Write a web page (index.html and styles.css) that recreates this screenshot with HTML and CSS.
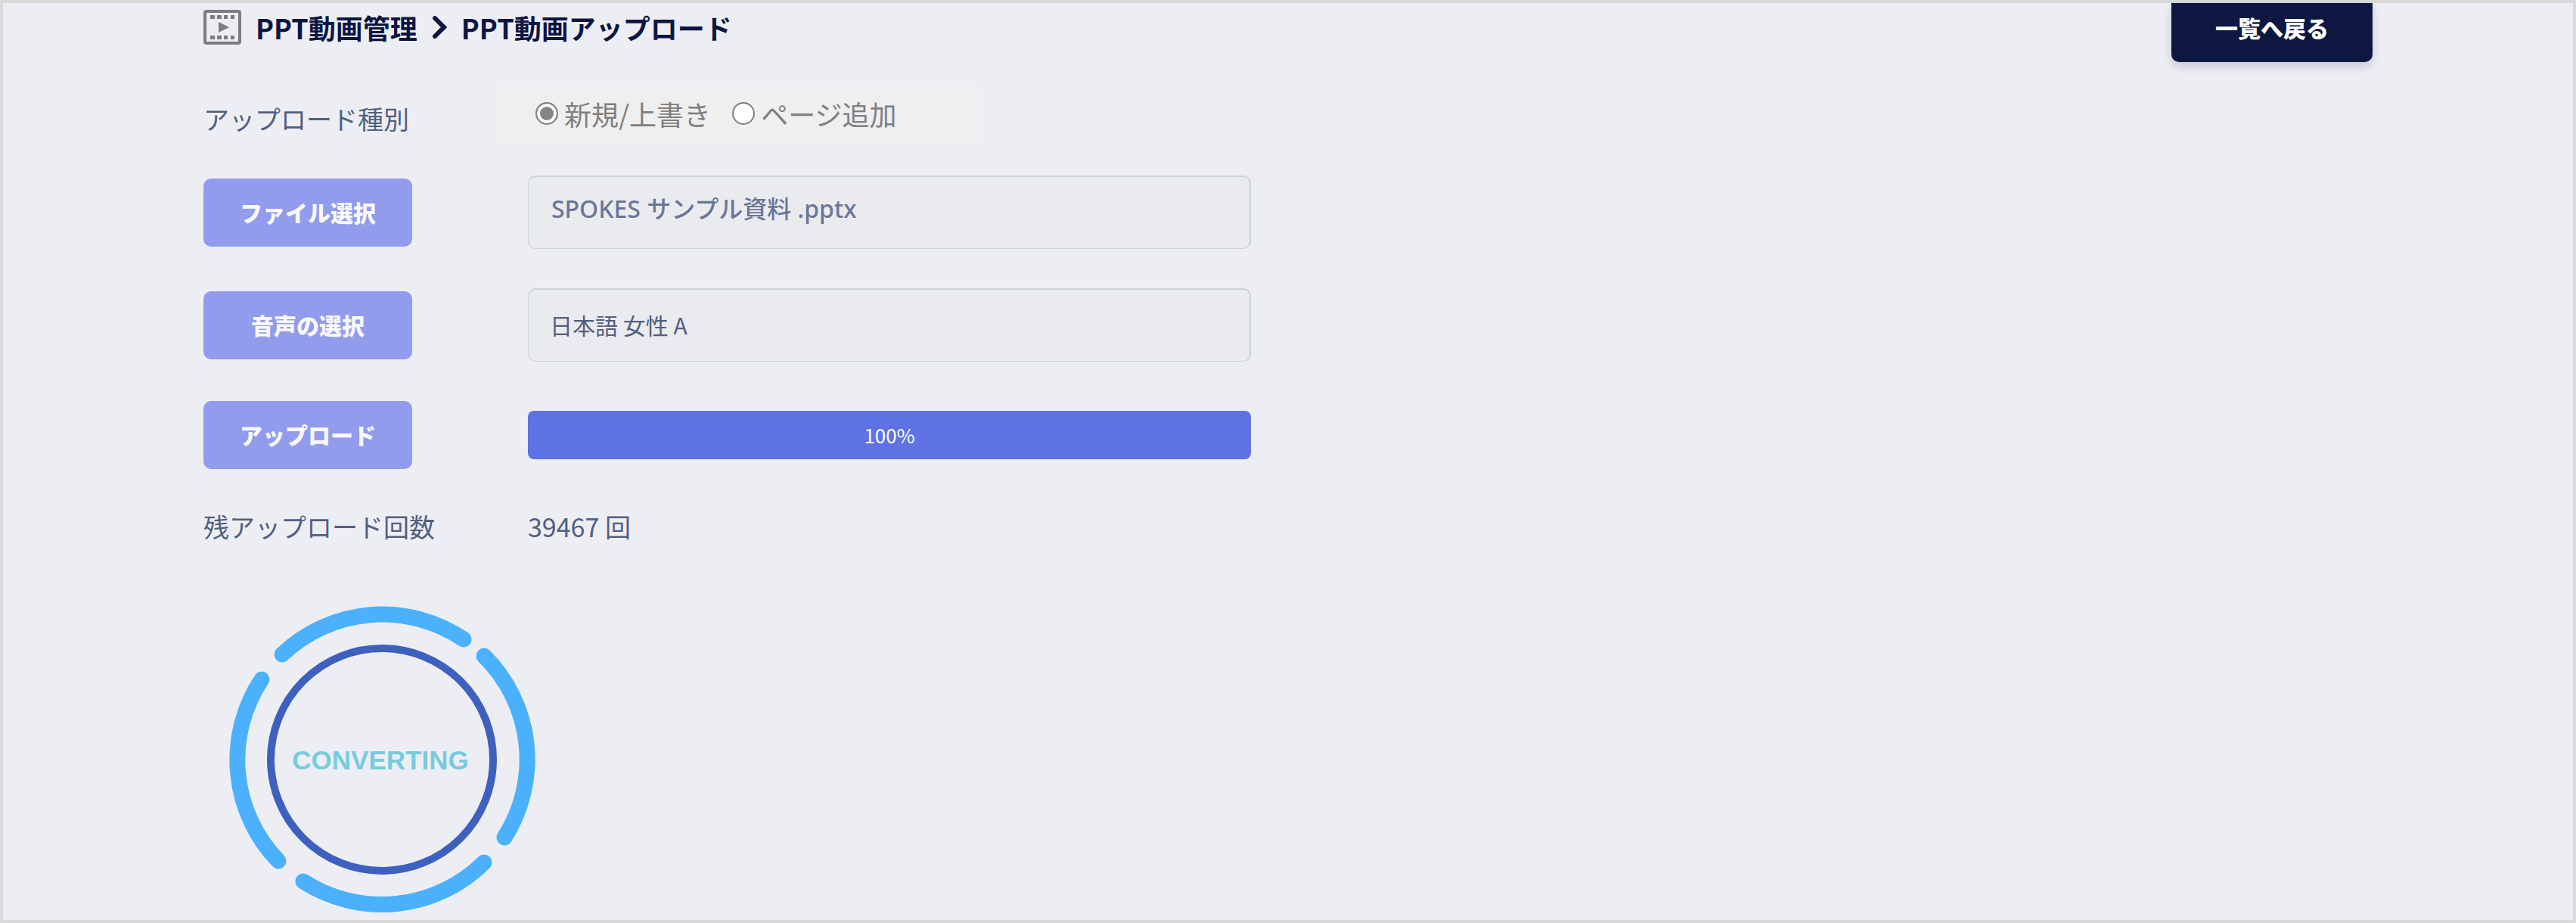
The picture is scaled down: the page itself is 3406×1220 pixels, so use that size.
FILE: index.html
```html
<!DOCTYPE html>
<html lang="ja">
<head>
  <meta charset="utf-8">
  <title>PPT動画アップロード</title>
  <link rel="stylesheet" href="styles.css">
</head>
<body>
  <main class="page">
    <header class="page-header">
      <h1 class="breadcrumb">
        <svg class="film-icon" viewBox="0 0 50 46" aria-hidden="true">
          <rect x="2" y="2" width="46" height="42" rx="2" fill="none" stroke="#7d7d7d" stroke-width="4"/>
          <g fill="#7d7d7d">
            <path d="M9 7h6v5H9zM18 7h6v5h-6zM27 7h5v5h-5zM36 7h5v5h-5z"/>
            <path d="M9 34h6v5H9zM18 34h6v5h-6zM27 34h5v5h-5zM36 34h5v5h-5z"/>
            <path d="M20 16l14 7-14 7z"/>
          </g>
        </svg>
        <span>PPT動画管理</span>
        <svg class="chevron" viewBox="0 0 20 30" aria-hidden="true">
          <path d="M4 3l12 12L4 27" fill="none" stroke="#0d1640" stroke-width="6" stroke-linecap="round"/>
        </svg>
        <span>PPT動画アップロード</span>
      </h1>
      <a class="back-button" href="#">一覧へ戻る</a>
    </header>

    <form>
      <div class="row type-row">
        <span class="label" id="type-label">アップロード種別</span>
        <div class="radio-group" role="radiogroup" aria-labelledby="type-label">
          <input type="radio" name="type" id="type-new" checked>
          <label for="type-new">新規/上書き</label>
          <input type="radio" name="type" id="type-add">
          <label for="type-add">ページ追加</label>
        </div>
      </div>

      <div class="rows">
        <div class="row">
          <button class="button" type="button">ファイル選択</button>
          <input class="text-box file-name" type="text" aria-label="ファイル選択" value="SPOKES サンプル資料 .pptx" readonly>
        </div>
        <div class="row">
          <button class="button" type="button">音声の選択</button>
          <input class="text-box" type="text" aria-label="音声の選択" value="日本語 女性 A" readonly>
        </div>
        <div class="row">
          <button class="button" type="button">アップロード</button>
          <div class="progress">
            <div class="progress-bar" role="progressbar" aria-valuenow="100" style="width: 100%">100%</div>
          </div>
        </div>
        <div class="row">
          <span class="label">残アップロード回数</span>
          <span class="label">39467 回</span>
        </div>
      </div>
    </form>

    <!-- 変換中 -->
    <svg class="converting" viewBox="-203 -203 406 406">
      <g class="arcs">
        <path d="M-132-139A192 192 0 0 1 108-159"/>
        <path d="M135-137A192 192 0 0 1 162 103"/>
        <path d="M135 136A192 192 0 0 1-104 161"/>
        <path d="M-137 134A192 192 0 0 1-159-106"/>
      </g>
      <circle class="inner" r="147"/>
      <text class="converting-text" x="-2" y="13">CONVERTING</text>
    </svg>
  </main>
</body>
</html>
```
FILE: styles.css
```css
* {
  box-sizing: border-box;
}

body {
  margin: 0;
  background-color: #edeef3;
  color: #525f7f;
  font-family: "Noto Sans CJK JP", sans-serif;
  font-size: 34px;
  line-height: 48px;
}

.page {
  min-height: 100vh;
  padding: 0 265px;
  border: 4px solid #d9d9d9;
}

.page-header {
  display: flex;
  justify-content: space-between;
  align-items: flex-start;
  height: 109px;
}

.breadcrumb {
  display: flex;
  align-items: center;
  gap: 19px;
  margin: 8px 0 0;
  color: #0d1640;
  font-size: 36px;
  font-weight: bold;
}

.film-icon {
  width: 50px;
  height: 46px;
}

.chevron {
  width: 20px;
  height: 30px;
}

.back-button {
  padding: 8px 58px 22px;
  border-radius: 0 0 10px 10px;
  background-color: #0e1741;
  box-shadow: 0 6px 12px rgba(50, 50, 93, 0.2);
  color: #fff;
  font-size: 30px;
  font-weight: 900;
  text-decoration: none;
}

.row {
  display: grid;
  grid-template-columns: 429px minmax(0, 956px);
  align-items: center;
}

.type-row {
  height: 88px;
  margin-bottom: 31px;
}

.radio-group {
  display: flex;
  align-items: center;
  align-self: start;
  width: 639px;
  height: 74px;
  margin-left: -42px;
  padding-left: 52px;
  background-color: #efefef;
  color: #7f7f7f;
  font-size: 36px;
}

.radio-group label {
  margin: 0 28px 0 8px;
}

.radio-group input {
  appearance: none;
  width: 30px;
  height: 30px;
  margin: 0;
  border: 2px solid #7f7f7f;
  border-radius: 50%;
  background-color: #fff;
}

.radio-group input:checked {
  border-color: #808080;
  background-color: #858585;
  box-shadow: inset 0 0 0 4px #fff;
}

.rows {
  display: flex;
  flex-direction: column;
  gap: 52px;
}

.button {
  width: 276px;
  height: 90px;
  padding: 0 0 2px;
  border: none;
  border-radius: 10px;
  background-color: #929cec;
  color: #f9f9fd;
  font-family: inherit;
  font-size: 30px;
  font-weight: 900;
}

.text-box {
  width: 100%;
  height: 97px;
  padding: 0 28px 2px;
  border: 1px solid #cad1d8;
  border-width: 2px 2px 1px 1px;
  border-radius: 10px;
  background-color: #eaebef;
  color: #525f7f;
  font-family: inherit;
  font-size: 30px;
}

.file-name {
  padding: 0 30px 14px;
  color: #6a7696;
  font-family: "Noto Sans", "Noto Sans CJK JP", sans-serif;
  font-size: 32px;
  font-weight: 500;
}

.progress {
  height: 64px;
  border-radius: 8px;
  overflow: hidden;
}

.progress-bar {
  height: 100%;
  background-color: #5e72e4;
  color: #fff;
  font-size: 26px;
  line-height: 64px;
  text-align: center;
}

.converting {
  display: block;
  width: 406px;
  height: 406px;
  margin: 81px 0 0 33px;
}

.arcs {
  fill: none;
  stroke: #4bb1fc;
  stroke-width: 21px;
  stroke-linecap: round;
}

.inner {
  fill: none;
  stroke: #3e60bf;
  stroke-width: 10px;
}

.converting-text {
  fill: #77cbdf;
  font-family: "Liberation Sans", sans-serif;
  font-size: 35px;
  font-weight: bold;
  text-anchor: middle;
}
```
